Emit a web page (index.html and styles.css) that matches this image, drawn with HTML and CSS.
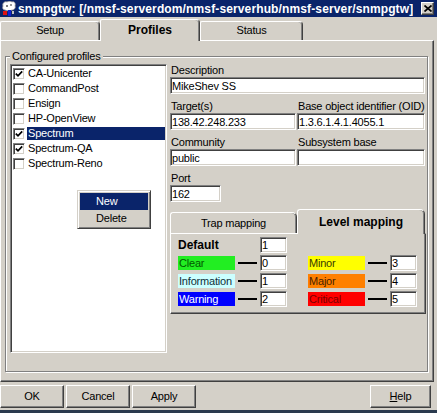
FILE: index.html
```html
<!DOCTYPE html>
<html lang="en">
<head>
    <meta charset="UTF-8">
    <title>snmpgtw</title>
    <link rel="stylesheet" href="styles.css">
</head>
<body>
<div class="window">
    <div class="titlebar">
        <svg class="app-icon" width="16" height="16" viewBox="0 0 16 16">
            <path d="M2 5 C1 2 4 0 6 1 C7 0 10 0 11 1 C13 0 15 2 14 5 C15 7 13 9 11 9 C9 10 6 10 4 9 C2 9 1 7 2 5Z" fill="#fff" stroke="#9a9a9a" stroke-width="0.8"/>
            <circle cx="6" cy="5" r="1" fill="#555"/>
            <circle cx="10" cy="4" r="1" fill="#777"/>
            <rect x="2" y="10" width="4" height="4" fill="#e01010"/>
            <rect x="7" y="9" width="3" height="6" fill="#1020d0"/>
            <rect x="11" y="10" width="2" height="3" fill="#c0c0c0"/>
        </svg>
        <span class="title">snmpgtw: [/nmsf-serverdom/nmsf-serverhub/nmsf-server/snmpgtw]</span>
        <span class="close-btn">
            <svg width="8" height="7" viewBox="0 0 8 7"><path d="M0.5 0.5L7.5 6.5M7.5 0.5L0.5 6.5" stroke="#000" stroke-width="1.7"/></svg>
        </span>
    </div>

    <div class="tabs">
        <div class="tab tab-setup">Setup</div>
        <div class="tab tab-profiles active">Profiles</div>
        <div class="tab tab-status">Status</div>
    </div>

    <div class="panel">
        <div class="group">
            <span class="legend">Configured profiles</span>
            <div class="group-body">
                <div class="listbox">
                    <div class="item"><span class="check checked"><svg width="8" height="8" viewBox="0 0 8 8"><path d="M0.8 3.6L3 5.8L7.2 1.4" fill="none" stroke="#000" stroke-width="1.7"/></svg></span><span class="item-text">CA-Unicenter</span></div>
                    <div class="item"><span class="check"></span><span class="item-text">CommandPost</span></div>
                    <div class="item"><span class="check"></span><span class="item-text">Ensign</span></div>
                    <div class="item"><span class="check"></span><span class="item-text">HP-OpenView</span></div>
                    <div class="item selected"><span class="check checked"><svg width="8" height="8" viewBox="0 0 8 8"><path d="M0.8 3.6L3 5.8L7.2 1.4" fill="none" stroke="#000" stroke-width="1.7"/></svg></span><span class="item-text">Spectrum</span></div>
                    <div class="item"><span class="check checked"><svg width="8" height="8" viewBox="0 0 8 8"><path d="M0.8 3.6L3 5.8L7.2 1.4" fill="none" stroke="#000" stroke-width="1.7"/></svg></span><span class="item-text">Spectrum-QA</span></div>
                    <div class="item"><span class="check"></span><span class="item-text">Spectrum-Reno</span></div>

                    <div class="menu">
                        <div class="menu-item hover">New</div>
                        <div class="menu-item">Delete</div>
                    </div>
                </div>

                <div class="details">
                    <div class="field">
                        <label>Description</label>
                        <input type="text" value="MikeShev SS">
                    </div>
                    <div class="field-pair">
                        <div class="field">
                            <label>Target(s)</label>
                            <input type="text" value="138.42.248.233">
                        </div>
                        <div class="field">
                            <label>Base object identifier (OID)</label>
                            <input type="text" value="1.3.6.1.4.1.4055.1">
                        </div>
                    </div>
                    <div class="field-pair">
                        <div class="field">
                            <label>Community</label>
                            <input type="text" value="public">
                        </div>
                        <div class="field">
                            <label>Subsystem base</label>
                            <input type="text" value="">
                        </div>
                    </div>
                    <div class="field port">
                        <label>Port</label>
                        <input type="text" value="162">
                    </div>

                    <div class="subtabs">
                        <div class="subtab">Trap mapping</div>
                        <div class="subtab active">Level mapping</div>
                    </div>
                    <div class="subpanel">
                        <div class="levels">
                            <div class="lvl-title">Default</div>
                            <input class="lvl-input" type="text" value="1">

                            <div class="swatch clear">Clear</div>
                            <div class="dash"></div>
                            <input class="lvl-input" type="text" value="0">
                            <div class="swatch minor right">Minor</div>
                            <div class="dash"></div>
                            <input class="lvl-input" type="text" value="3">

                            <div class="swatch info">Information</div>
                            <div class="dash"></div>
                            <input class="lvl-input" type="text" value="1">
                            <div class="swatch major right">Major</div>
                            <div class="dash"></div>
                            <input class="lvl-input" type="text" value="4">

                            <div class="swatch warning">Warning</div>
                            <div class="dash"></div>
                            <input class="lvl-input" type="text" value="2">
                            <div class="swatch critical right">Critical</div>
                            <div class="dash"></div>
                            <input class="lvl-input" type="text" value="5">
                        </div>
                    </div>
                </div>
            </div>
        </div>
    </div>

    <div class="buttons">
        <div class="btn">OK</div>
        <div class="btn">Cancel</div>
        <div class="btn">Apply</div>
        <div class="btn btn-help"><u>H</u>elp</div>
    </div>
    <div class="bottom-edge"></div>
</div>
</body>
</html>
```

FILE: styles.css
```css
body {
    margin: 0;
    background-color: #d4d0c8;
    font-family: "Liberation Sans", Arial, sans-serif;
    font-size: 11px;
    letter-spacing: -0.2px;
    color: #000;
    overflow: hidden;
}
.window {
    width: 437px;
    height: 413px;
    display: flex;
    flex-direction: column;
}

/* title bar */
.titlebar {
    height: 17px;
    flex: none;
    background-color: #0a246a;
    display: flex;
    align-items: center;
    color: #fff;
}
.app-icon {
    flex: none;
    margin-left: 1px;
}
.title {
    margin-left: 1px;
    font-weight: bold;
    font-size: 12px;
    letter-spacing: 0.13px;
    white-space: nowrap;
    overflow: hidden;
    min-width: 0;
}
.close-btn {
    margin-left: auto;
    margin-right: 3px;
    width: 13px;
    height: 13px;
    box-sizing: border-box;
    flex: none;
    background-color: #d4d0c8;
    border: 1px solid;
    border-color: #fff #404040 #404040 #fff;
    box-shadow: inset -1px -1px #808080;
    display: flex;
    align-items: center;
    justify-content: center;
}

/* main tabs */
.tabs {
    height: 23px;
    flex: none;
    display: flex;
    align-items: flex-end;
}
.tab {
    box-sizing: border-box;
    height: 19px;
    border: 1px solid #fff;
    border-right-color: #404040;
    border-bottom: none;
    border-radius: 2px 4px 0 0;
    box-shadow: inset -1px 0 #808080;
    text-align: center;
    line-height: 17px;
}
.tab-setup { width: 100px; }
.tab-profiles { width: 100px; }
.tab-status { width: 103px; }
.tab.active {
    height: 22px;
    margin-bottom: -1px;
    position: relative;
    z-index: 1;
    background-color: #d4d0c8;
    font-weight: bold;
    font-size: 12px;
    letter-spacing: 0;
    line-height: 20px;
}

.panel {
    box-sizing: border-box;
    width: 434px;
    height: 342px;
    flex: none;
    border: 1px solid;
    border-color: #fff #404040 #404040 #fff;
    box-shadow: inset -1px -1px #808080;
    padding: 15px 0 0 4px;
}

/* group box */
.group {
    box-sizing: border-box;
    width: 423px;
    height: 316px;
    border: 1px solid #808080;
    box-shadow: inset 1px 1px #fff, 1px 1px #fff;
    display: flex;
    flex-direction: column;
    padding-left: 4px;
}
.legend {
    align-self: flex-start;
    margin-top: -7px;
    padding: 0 2px;
    line-height: 13px;
    background-color: #d4d0c8;
}
.group-body {
    display: flex;
    gap: 3px;
    margin-top: 1px;
}

/* list */
.listbox {
    position: relative;
    box-sizing: border-box;
    width: 157px;
    height: 289px;
    background-color: #fff;
    border: 1px solid;
    border-color: #808080 #fff #fff #808080;
    box-shadow: inset 1px 1px #404040, inset -1px -1px #d4d0c8;
    padding: 1px 1px 0 1px;
}
.item {
    height: 15px;
    display: flex;
    align-items: center;
}
.check {
    box-sizing: border-box;
    width: 12px;
    height: 12px;
    margin-left: 1px;
    flex: none;
    background-color: #fff;
    border: 1px solid;
    border-color: #808080 #fff #fff #808080;
    box-shadow: inset 1px 1px #404040, inset -1px -1px #d4d0c8;
    display: flex;
    align-items: center;
    justify-content: center;
}
.item-text {
    flex: 1;
    margin-left: 2px;
    padding-left: 1px;
    height: 13px;
    line-height: 13px;
}
.item.selected .item-text {
    background-color: #0a246a;
    color: #fff;
}

.menu {
    position: absolute;
    left: 66px;
    top: 125px;
    box-sizing: border-box;
    width: 74px;
    height: 39px;
    background-color: #d4d0c8;
    border: 1px solid;
    border-color: #d4d0c8 #404040 #404040 #d4d0c8;
    box-shadow: inset 1px 1px #fff, inset -1px -1px #808080;
    padding: 2px 2px 0 2px;
}
.menu-item {
    height: 17px;
    line-height: 17px;
    padding-left: 16px;
}
.menu-item.hover {
    background-color: #0a246a;
    color: #fff;
}

/* fields */
.details {
    width: 255px;
}
.field label {
    display: block;
    line-height: 13px;
    padding-left: 1px;
    white-space: nowrap;
}
.field input,
.lvl-input {
    display: block;
    box-sizing: border-box;
    width: 100%;
    height: 17px;
    margin: 0 0 6px 0;
    padding: 0 0 0 1px;
    font-family: "Liberation Sans", Arial, sans-serif;
    font-size: 11px;
    letter-spacing: -0.2px;
    color: #000;
    background-color: #fff;
    border: 1px solid;
    border-color: #808080 #fff #fff #808080;
    box-shadow: inset 1px 1px #404040, inset -1px -1px #d4d0c8;
    outline: none;
}
.field-pair {
    display: grid;
    grid-template-columns: 126px 128px;
    column-gap: 1px;
}
.port input {
    width: 51px;
    margin-bottom: 0;
}

/* level mapping tabs */
.subtabs {
    display: flex;
    align-items: flex-end;
    height: 24px;
    margin-top: 7px;
}
.subtab {
    box-sizing: border-box;
    width: 127px;
    height: 21px;
    border: 1px solid #fff;
    border-right-color: #404040;
    border-bottom: none;
    border-radius: 3px 5px 0 0;
    box-shadow: inset -1px 0 #808080;
    text-align: center;
    line-height: 20px;
}
.subtab.active {
    width: 128px;
    height: 25px;
    margin-bottom: -1px;
    position: relative;
    z-index: 1;
    background-color: #d4d0c8;
    font-weight: bold;
    font-size: 12px;
    letter-spacing: 0;
    line-height: 24px;
}
.subpanel {
    box-sizing: border-box;
    width: 256px;
    height: 81px;
    border: 1px solid;
    border-color: #fff #404040 #404040 #fff;
    box-shadow: inset -1px -1px #808080;
    padding: 3px 0 0 7px;
}
.levels {
    display: grid;
    grid-template-columns: 57px 25px 27px 21px 57px 25px 27px;
    grid-auto-rows: 16px;
    row-gap: 2px;
    align-items: center;
}
.lvl-title {
    grid-column: 1 / span 2;
    font-weight: bold;
    font-size: 12px;
    letter-spacing: 0;
}
.lvl-input {
    width: 27px;
    height: 16px;
    margin: 0;
}
.swatch {
    grid-column: 1;
    height: 14px;
    line-height: 14px;
    padding-left: 1px;
    white-space: nowrap;
}
.swatch.right {
    grid-column: 5;
}
.dash {
    height: 2px;
    margin: 0 3px;
    background-color: #000;
}
.clear { background-color: #22ee22; color: #005a00; }
.info { background-color: #ccffff; color: #10303a; }
.warning { background-color: #0000ff; color: #fff; }
.minor { background-color: #ffff00; color: #3a3a00; }
.major { background-color: #ff8000; color: #4a2000; }
.critical { background-color: #ff0000; color: #7a0000; }

/* bottom buttons */
.buttons {
    display: flex;
    gap: 2px;
    height: 23px;
    margin-top: 3px;
    flex: none;
}
.btn {
    box-sizing: border-box;
    width: 64px;
    height: 23px;
    border: 1px solid;
    border-color: #fff #404040 #404040 #fff;
    box-shadow: inset -1px -1px #808080;
    text-align: center;
    line-height: 21px;
}
.btn-help {
    width: 61px;
    margin-left: auto;
    margin-right: 6px;
}
.bottom-edge {
    height: 3px;
    margin-top: 2px;
    flex: none;
    background-color: #2a3a4e;
}
```
